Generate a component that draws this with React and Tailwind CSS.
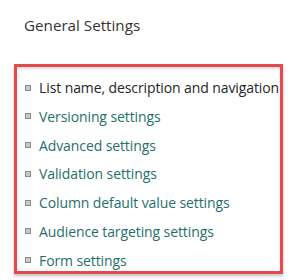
import React from "react";

const items = [
    "List name, description and navigation",
    "Versioning settings",
    "Advanced settings",
    "Validation settings",
    "Column default value settings",
    "Audience targeting settings",
    "Form settings",
];

export default function App() {
    return (
        <div className="w-[293px] h-[280px] bg-white font-['Open_Sans',sans-serif] overflow-hidden">
            {/* Heading */}
            <h2 className="pl-6 pt-[14px] text-[15.2px] leading-[22px] text-[#333]">General Settings</h2>

            {/* Highlighted list */}
            <div className="ml-[14px] mt-[28px] w-[269px] h-[210px] border-[3px] border-[#e5484d] shadow-[0_2px_3px_rgba(0,0,0,0.25),inset_0_2px_3px_rgba(0,0,0,0.15)]">
                <ul className="pt-[10px] pl-[8px] flex flex-col gap-[7.8px]">
                    {items.map((item, i) => (
                        <li key={item} className="flex items-center h-[21px] whitespace-nowrap">
                            <span className="w-[6px] h-[6px] mr-[8px] shrink-0 border border-[#8a8a8a] bg-[#c8c8c8]" />
                            <span className={"text-[14px] tracking-[-0.1px] " + (i === 0 ? "text-[#262626]" : "text-[#1f6f6b]")}>
                                {item}
                            </span>
                        </li>
                    ))}
                </ul>
            </div>
        </div>
    );
}
